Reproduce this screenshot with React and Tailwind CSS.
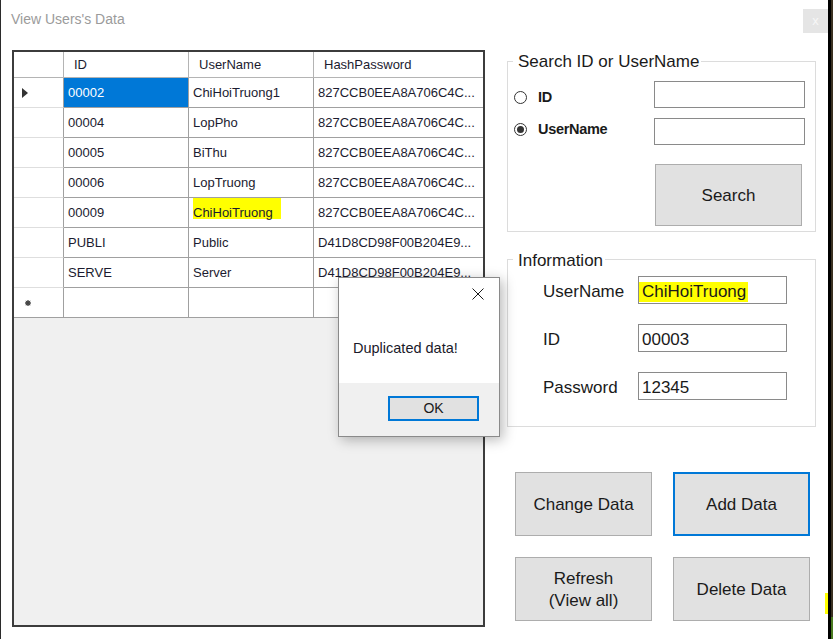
import React from "react";

const rows = [
  { id: "00002", name: "ChiHoiTruong1", hash: "827CCB0EEA8A706C4C...", selected: true, current: true },
  { id: "00004", name: "LopPho", hash: "827CCB0EEA8A706C4C..." },
  { id: "00005", name: "BiThu", hash: "827CCB0EEA8A706C4C..." },
  { id: "00006", name: "LopTruong", hash: "827CCB0EEA8A706C4C..." },
  { id: "00009", name: "ChiHoiTruong", hash: "827CCB0EEA8A706C4C...", mark: true },
  { id: "PUBLI", name: "Public", hash: "D41D8CD98F00B204E9..." },
  { id: "SERVE", name: "Server", hash: "D41D8CD98F00B204E9..." },
];

function Radio({ checked }) {
  return (
    <div className="w-[13px] h-[13px] rounded-full border border-[#333333] bg-white flex items-center justify-center">
      {checked && <div className="w-[7px] h-[7px] rounded-full bg-[#333333]" />}
    </div>
  );
}

function Grid() {
  const cell = "border-b border-[#a0a0a0] flex items-center text-[13px] text-[#1b1b2f] whitespace-nowrap overflow-hidden";
  return (
    <div className="w-[473px] h-[577px] border-2 border-[#3c3c3c] bg-[#f0f0f0]">
      <div className="grid grid-cols-[50px_125px_125px_169px] h-[26px] bg-white">
        <div className="border-r border-b border-[#b4b4b4]" />
        <div className="border-r border-b border-[#b4b4b4] pl-[10px] flex items-center text-[13px] text-[#1b1b2f]">ID</div>
        <div className="border-r border-b border-[#b4b4b4] pl-[10px] flex items-center text-[13px] text-[#1b1b2f]">UserName</div>
        <div className="border-b border-[#b4b4b4] pl-[10px] flex items-center text-[13px] text-[#1b1b2f]">HashPassword</div>
      </div>
      {rows.map((r) => (
        <div key={r.id} className="grid grid-cols-[50px_125px_125px_169px] h-[30px] bg-white">
          <div className="border-r border-[#a0a0a0] border-b-[#dedede] border-b flex items-center pl-[8px]">
            {r.current && (
              <svg width="6" height="10" viewBox="0 0 6 10">
                <path d="M0 0 L6 5 L0 10 Z" fill="#333333" />
              </svg>
            )}
          </div>
          <div className={`${cell} border-r pl-[4px] ${r.selected ? "bg-[#0078d7] text-white" : ""}`}>{r.id}</div>
          <div className={`${cell} border-r pl-[4px] relative`}>
            {r.mark && <div className="absolute left-[4px] top-0 w-[88px] h-[21px] bg-[#ffff00]" />}
            <span className="relative">{r.name}</span>
          </div>
          <div className={`${cell} pl-[4px]`}>{r.hash}</div>
        </div>
      ))}
      <div className="grid grid-cols-[50px_125px_125px_169px] h-[30px] bg-white">
        <div className="border-r border-[#a0a0a0] border-b flex items-center pl-[11px]">
          <svg width="6" height="6" viewBox="0 0 6 6">
            <circle cx="3" cy="3" r="2.6" fill="#555555" />
            <path d="M3 0 V6 M0 3 H6 M0.8 0.8 L5.2 5.2 M5.2 0.8 L0.8 5.2" stroke="#444444" strokeWidth="0.8" />
          </svg>
        </div>
        <div className={`${cell} border-r`} />
        <div className={`${cell} border-r`} />
        <div className={cell} />
      </div>
    </div>
  );
}

export default function App() {
  const btn = "h-[64px] pt-[2px] bg-[#e1e1e1] text-[17px] leading-[22px] text-[#1a1a1a] flex flex-col items-center justify-center text-center";
  const box = "w-[149px] h-[28px] border border-[#8a8a8a] bg-white pl-[3px] pt-[3px] flex items-center text-[17px] text-[#1a1a1a]";
  return (
    <div className="w-[833px] h-[639px] flex overflow-hidden bg-[#2a2418] font-['Liberation_Sans',Arial,sans-serif]">
      <div className="relative w-[828px] h-full bg-white border-l border-[#2b2b2b] flex flex-col">
        <div className="h-[50px] flex justify-between items-start">
          <div className="mt-[10px] ml-[10px] text-[14px] leading-[18px] text-[#9b9b9b]">View Users's Data</div>
          <div className="mt-[9px] w-[25px] h-[24px] bg-[#e5e5e5] flex items-center justify-center text-[#f7f7f7] text-[13px]">x</div>
        </div>
        <div className="flex items-start pl-[11px]">
          <Grid />
          <div className="ml-[22px] w-[309px] flex flex-col">
            <fieldset className="border border-[#dcdcdc] pb-[5px]">
              <legend className="ml-[5px] pl-[5px] pr-[2px] pt-[2px] text-[17px] leading-[20px] text-[#1a1a1a]">Search ID or UserName</legend>
              <div className="pl-[6px] pt-[9px] flex flex-col">
                <div className="flex items-center h-[27px]">
                  <div className="w-[140px] flex items-center gap-[11px] translate-y-[3px]">
                    <Radio />
                    <span className="text-[14.5px] font-bold text-[#1a1a1a] tracking-[-0.3px]">ID</span>
                  </div>
                  <div className="w-[151px] h-[27px] border border-[#8a8a8a] bg-white" />
                </div>
                <div className="flex items-center h-[27px] mt-[10px]">
                  <div className="w-[140px] flex items-center gap-[11px] -translate-y-[2px]">
                    <Radio checked />
                    <span className="text-[14.5px] font-bold text-[#1a1a1a] tracking-[-0.3px]">UserName</span>
                  </div>
                  <div className="w-[151px] h-[27px] border border-[#8a8a8a] bg-white" />
                </div>
                <div className="ml-[141px] mt-[19px] w-[147px] h-[62px] pt-[2px] bg-[#e1e1e1] border border-[#adadad] text-[17px] text-[#1a1a1a] flex items-center justify-center">Search</div>
              </div>
            </fieldset>
            <fieldset className="mt-[15px] border border-[#dcdcdc] pb-[25px]">
              <legend className="ml-[5px] pl-[5px] pr-[2px] pt-[4px] text-[17px] leading-[20px] text-[#1a1a1a]">Information</legend>
              <div className="pt-[5px] pl-[35px] flex flex-col">
                <div className="flex items-center">
                  <div className="w-[95px] pt-[3px] text-[17px] text-[#1a1a1a]">UserName</div>
                  <div className={`relative ${box}`}>
                    <div className="absolute left-0 top-[5px] w-[109px] h-[20px] bg-[#ffff00]" />
                    <span className="relative">ChiHoiTruong</span>
                  </div>
                </div>
                <div className="flex items-center mt-[19px]">
                  <div className="w-[95px] pt-[3px] text-[17px] text-[#1a1a1a]">ID</div>
                  <div className={box}>00003</div>
                </div>
                <div className="flex items-center mt-[20px]">
                  <div className="w-[95px] pt-[3px] text-[17px] text-[#1a1a1a]">Password</div>
                  <div className={box}>12345</div>
                </div>
              </div>
            </fieldset>
            <div className="mt-[45px] ml-[8px] grid grid-cols-[137px_137px] gap-x-[21px] gap-y-[21px]">
              <div className={`${btn} border border-[#adadad]`}>Change Data</div>
              <div className={`${btn} border-2 border-[#0078d7]`}>Add Data</div>
              <div className={`${btn} border border-[#adadad]`}>
                <span>Refresh</span>
                <span>(View all)</span>
              </div>
              <div className={`${btn} border border-[#adadad]`}>Delete Data</div>
            </div>
          </div>
        </div>

        <div className="absolute left-[337px] top-[277px] w-[162px] h-[160px] border border-[#8a8a8a] bg-[#f0f0f0] flex flex-col shadow-[3px_3px_12px_rgba(0,0,0,0.28)]">
          <div className="h-[105px] bg-white flex flex-col">
            <div className="flex justify-end pt-[10px] pr-[15px]">
              <svg width="12" height="12" viewBox="0 0 12 12">
                <path d="M0.5 0.5 L11.5 11.5 M11.5 0.5 L0.5 11.5" stroke="#1a1a1a" strokeWidth="1" />
              </svg>
            </div>
            <div className="mt-[40px] pl-[14px] text-[14.5px] leading-[17px] text-[#1a1a2a]">Duplicated data!</div>
          </div>
          <div className="flex-1 flex justify-end items-start pt-[13px] pr-[20px]">
            <div className="w-[91px] h-[25px] border-2 border-[#0078d7] bg-[#e1e1e1] text-[14px] text-[#1a1a1a] flex items-center justify-center">OK</div>
          </div>
        </div>

        <div className="absolute left-[824px] top-[593px] w-[3px] h-[21px] bg-[#ffff00]" />
      </div>
      <div className="w-[3px] h-full bg-black" />
      <div className="w-[2px] h-full flex flex-col bg-[#3b3222]">
        <div className="flex-1" />
        <div className="h-[22px] bg-[#4a7a20]" />
      </div>
    </div>
  );
}
